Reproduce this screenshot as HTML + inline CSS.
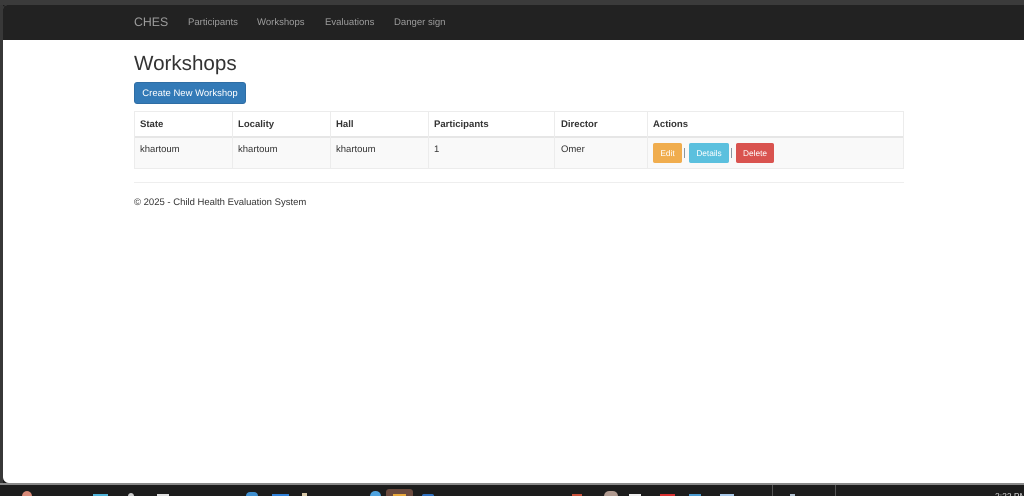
<!DOCTYPE html>
<html><head><meta charset="utf-8"><title>Workshops</title>
<style>
html,body{margin:0;padding:0;width:1024px;height:496px;overflow:hidden;background:#1c1c1c}
#root{position:relative;width:1024px;height:496px;overflow:hidden;background:#1c1c1c;font-family:"Liberation Sans",sans-serif;color:#333;text-rendering:geometricPrecision}
.a{position:absolute;white-space:nowrap}
#page{position:absolute;left:3px;top:5px;width:1021px;height:478px;background:#fff;border-radius:4px 0 0 6px;overflow:hidden}
#nav{position:absolute;left:3px;top:5px;width:1021px;height:35px;background:#222;border-radius:4px 0 0 0}
.n{font-size:9.55px;color:#9d9d9d;top:17px;line-height:12px;filter:blur(.2px)}
.l{background:#ececec}
.c{font-size:9.5px;line-height:12px;color:#333;filter:blur(.2px)}
.h{font-size:9.55px;line-height:12px;font-weight:bold;color:#333;filter:blur(.15px)}
.b{border-radius:2px;text-align:center;color:#fff;font-size:8.3px;line-height:20px;height:20px;top:143px}
.b span{filter:blur(.2px);display:inline-block}
</style></head><body>
<div id="root">
<div class="a" style="left:0;top:0;width:1024px;height:5px;background:#3b3b3b"></div>
<div class="a" style="left:0;top:5px;width:3px;height:480px;background:#383838"></div>
<div id="page"></div>
<div id="nav"></div>
<div class="a" style="left:134px;top:15px;font-size:12.3px;line-height:15px;color:#9d9d9d;filter:blur(.2px)">CHES</div>
<div class="a n" style="left:188px">Participants</div>
<div class="a n" style="left:257px">Workshops</div>
<div class="a n" style="left:325px">Evaluations</div>
<div class="a n" style="left:394px">Danger sign</div>

<div class="a" style="left:134px;top:51px;font-size:20.6px;line-height:25px;color:#333;filter:blur(.2px)">Workshops</div>
<div class="a" style="left:134px;top:82px;width:112px;height:22px;background:#337ab7;border-radius:3px;box-sizing:border-box;border:1px solid #2e6da4;color:#fff;font-size:9.5px;line-height:22px;text-align:center">Create New Workshop</div>

<div class="a" style="left:134px;top:137px;width:770px;height:31px;background:#f9f9f9"></div>
<div class="a l" style="left:134px;top:111px;width:770px;height:1px"></div>
<div class="a" style="left:134px;top:136px;width:770px;height:2px;background:#e6e6e6"></div>
<div class="a l" style="left:134px;top:168px;width:770px;height:1px"></div>
<div class="a l" style="left:134px;top:111px;width:1px;height:57px"></div>
<div class="a l" style="left:232px;top:111px;width:1px;height:57px"></div>
<div class="a l" style="left:330px;top:111px;width:1px;height:57px"></div>
<div class="a l" style="left:428px;top:111px;width:1px;height:57px"></div>
<div class="a l" style="left:554px;top:111px;width:1px;height:57px"></div>
<div class="a l" style="left:647px;top:111px;width:1px;height:57px"></div>
<div class="a l" style="left:903px;top:111px;width:1px;height:58px"></div>

<div class="a h" style="left:140px;top:119px">State</div>
<div class="a h" style="left:238px;top:119px">Locality</div>
<div class="a h" style="left:336px;top:119px">Hall</div>
<div class="a h" style="left:434px;top:119px">Participants</div>
<div class="a h" style="left:561px;top:119px">Director</div>
<div class="a h" style="left:653px;top:119px">Actions</div>

<div class="a c" style="left:140px;top:144px">khartoum</div>
<div class="a c" style="left:238px;top:144px">khartoum</div>
<div class="a c" style="left:336px;top:144px">khartoum</div>
<div class="a c" style="left:434px;top:144px">1</div>
<div class="a c" style="left:561px;top:144px">Omer</div>

<div class="a b" style="left:653px;width:29px;background:#f0ad4e"><span>Edit</span></div>
<div class="a" style="left:684px;top:148px;width:1px;height:10px;background:#8a96a0"></div>
<div class="a b" style="left:689px;width:40px;background:#5bc0de"><span>Details</span></div>
<div class="a" style="left:731px;top:148px;width:1px;height:10px;background:#8a96a0"></div>
<div class="a b" style="left:736px;width:38px;background:#d9534f"><span>Delete</span></div>

<div class="a" style="left:134px;top:182px;width:770px;height:1px;background:#eee"></div>
<div class="a c" style="left:134px;top:197px">© 2025 - Child Health Evaluation System</div>

<div class="a" style="left:0;top:483px;width:1024px;height:2px;background:#8a8a8a"></div>
<div class="a" style="left:0;top:485px;width:1024px;height:11px;background:#1c1c1c"></div>
<div class="a" style="left:22px;top:491px;width:10px;height:10px;border-radius:50%;background:#d98a78"></div>
<div class="a" style="left:93px;top:494px;width:15px;height:2px;background:#4fb3d9"></div>
<div class="a" style="left:128px;top:493px;width:6px;height:3px;border-radius:3px 3px 0 0;background:#ccc"></div>
<div class="a" style="left:157px;top:494px;width:12px;height:2px;background:#e0e0e0"></div>
<div class="a" style="left:246px;top:492px;width:12px;height:4px;border-radius:6px 6px 0 0;background:#3f8fd0"></div>
<div class="a" style="left:272px;top:494px;width:17px;height:2px;background:#2f80d8"></div>
<div class="a" style="left:302px;top:493px;width:5px;height:3px;background:#d8c8a8"></div>
<div class="a" style="left:370px;top:491px;width:11px;height:5px;border-radius:6px 6px 0 0;background:#4fa3e0"></div>
<div class="a" style="left:386px;top:489px;width:27px;height:7px;border-radius:3px 3px 0 0;background:#6b4a3e"></div>
<div class="a" style="left:393px;top:494px;width:13px;height:2px;background:#e8a83c"></div>
<div class="a" style="left:422px;top:494px;width:12px;height:2px;border-radius:6px 6px 0 0;background:#2f70c0"></div>
<div class="a" style="left:572px;top:494px;width:10px;height:2px;background:#c8503a"></div>
<div class="a" style="left:604px;top:491px;width:14px;height:5px;border-radius:6px 6px 0 0;background:#b09a90"></div>
<div class="a" style="left:629px;top:494px;width:12px;height:2px;background:#eee"></div>
<div class="a" style="left:660px;top:494px;width:15px;height:2px;background:#d83030"></div>
<div class="a" style="left:689px;top:494px;width:12px;height:2px;background:#4a9ad0"></div>
<div class="a" style="left:720px;top:494px;width:14px;height:2px;background:#a8c8e8"></div>
<div class="a" style="left:772px;top:485px;width:1px;height:11px;background:#555"></div>
<div class="a" style="left:835px;top:485px;width:1px;height:11px;background:#555"></div>
<div class="a" style="left:790px;top:494px;width:5px;height:2px;background:#b0c0d0"></div>
<div class="a" style="left:995px;top:491px;font-size:8.5px;line-height:10px;color:#ddd">2:22 PM</div>
</div>
</body></html>
